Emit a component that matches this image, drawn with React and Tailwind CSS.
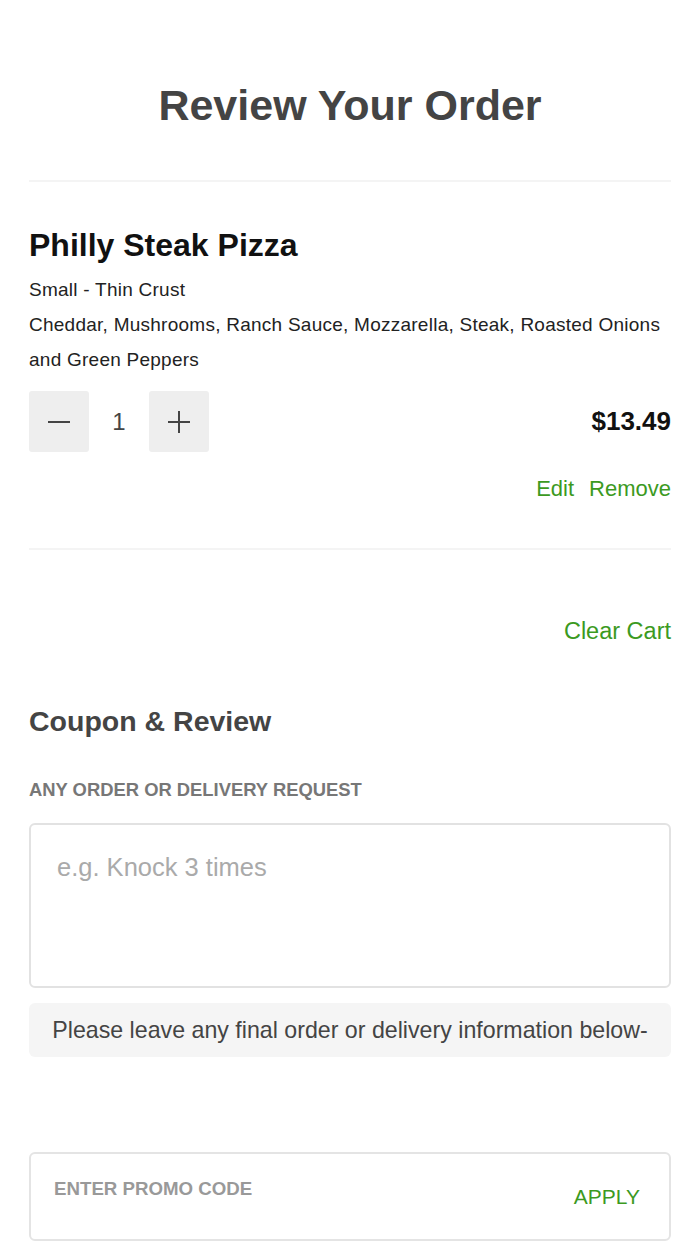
import React, { useState } from "react";

const font = { fontFamily: '"Liberation Sans", Arial, sans-serif' };

export default function App() {
  const [qty, setQty] = useState(1);
  const [note, setNote] = useState("");
  const [promo, setPromo] = useState("");

  return (
    <div className="min-h-screen bg-white px-[29px] text-[#222]" style={font}>
      {/* Header */}
      <div className="pt-[82px] pb-[52px] text-center">
        <h1 className="text-[43px] leading-[46px] font-bold text-[#444]">Review Your Order</h1>
      </div>
      <div className="h-[2px] bg-[#f4f4f4]" />

      {/* Cart item */}
      <div className="pt-[44px] pb-[43px]">
        <h2 className="text-[32px] leading-[38px] font-bold text-[#111]">Philly Steak Pizza</h2>
        <div className="mt-[8px] text-[19px] leading-[35px] tracking-[0.25px] text-[#222]">
          <p>Small - Thin Crust</p>
          <p>Cheddar, Mushrooms, Ranch Sauce, Mozzarella, Steak, Roasted Onions and Green Peppers</p>
        </div>

        <div className="mt-[14px] flex items-center justify-between">
          <div className="flex items-center">
            <button
              className="flex h-[61px] w-[60px] items-center justify-center rounded-[3px] bg-[#eeeeee] text-[#444]"
              onClick={() => setQty(Math.max(1, qty - 1))}
            >
              <svg width="26" height="26" viewBox="0 0 26 26">
                <path d="M2 13h22" stroke="currentColor" strokeWidth="2" />
              </svg>
            </button>
            <span className="w-[60px] text-center text-[24px] text-[#444]">{qty}</span>
            <button
              className="flex h-[61px] w-[60px] items-center justify-center rounded-[3px] bg-[#eeeeee] text-[#444]"
              onClick={() => setQty(qty + 1)}
            >
              <svg width="26" height="26" viewBox="0 0 26 26">
                <path d="M2 13h22M13 2v22" stroke="currentColor" strokeWidth="2" />
              </svg>
            </button>
          </div>
          <span className="text-[26px] font-bold text-[#111]">$13.49</span>
        </div>

        <div className="mt-[20px] flex justify-end gap-[15px] text-[22px] leading-[33px] text-[#3c9a1f]">
          <button>Edit</button>
          <button>Remove</button>
        </div>
      </div>
      <div className="h-[2px] bg-[#f4f4f4]" />

      {/* Clear cart */}
      <div className="flex justify-end pt-[66px]">
        <button className="text-[23.5px] leading-[30px] text-[#3c9a1f]">Clear Cart</button>
      </div>

      {/* Coupon & Review */}
      <h3 className="mt-[58px] text-[28.5px] leading-[34px] font-bold text-[#444]">Coupon &amp; Review</h3>
      <p className="mt-[41px] text-[18.4px] leading-[22px] font-bold text-[#777]">ANY ORDER OR DELIVERY REQUEST</p>

      <textarea
        className="mt-[22px] block h-[165px] w-full resize-none rounded-[6px] border-2 border-[#e2e2e2] px-[26px] pt-[27px] text-[25.5px] leading-[30px] text-[#444] placeholder:text-[#aaa] outline-none"
        placeholder="e.g. Knock 3 times"
        value={note}
        onChange={(e) => setNote(e.target.value)}
        style={font}
      />
      <div className="mt-[15px] flex h-[54px] items-center justify-center rounded-[6px] bg-[#f5f5f5] text-[23.2px] text-[#444]">
        Please leave any final order or delivery information below-
      </div>

      {/* Promo */}
      <div className="mt-[95px] flex h-[89px] items-center justify-between rounded-[6px] border-2 border-[#e4e4e4] pl-[23px] pr-[29px]">
        <input
          className="mb-[15px] flex-1 bg-transparent text-[18.7px] font-bold text-[#999] placeholder:text-[#999] outline-none"
          placeholder="ENTER PROMO CODE"
          value={promo}
          onChange={(e) => setPromo(e.target.value)}
          style={font}
        />
        <button className="text-[21px] text-[#3c9a1f]">APPLY</button>
      </div>
    </div>
  );
}
